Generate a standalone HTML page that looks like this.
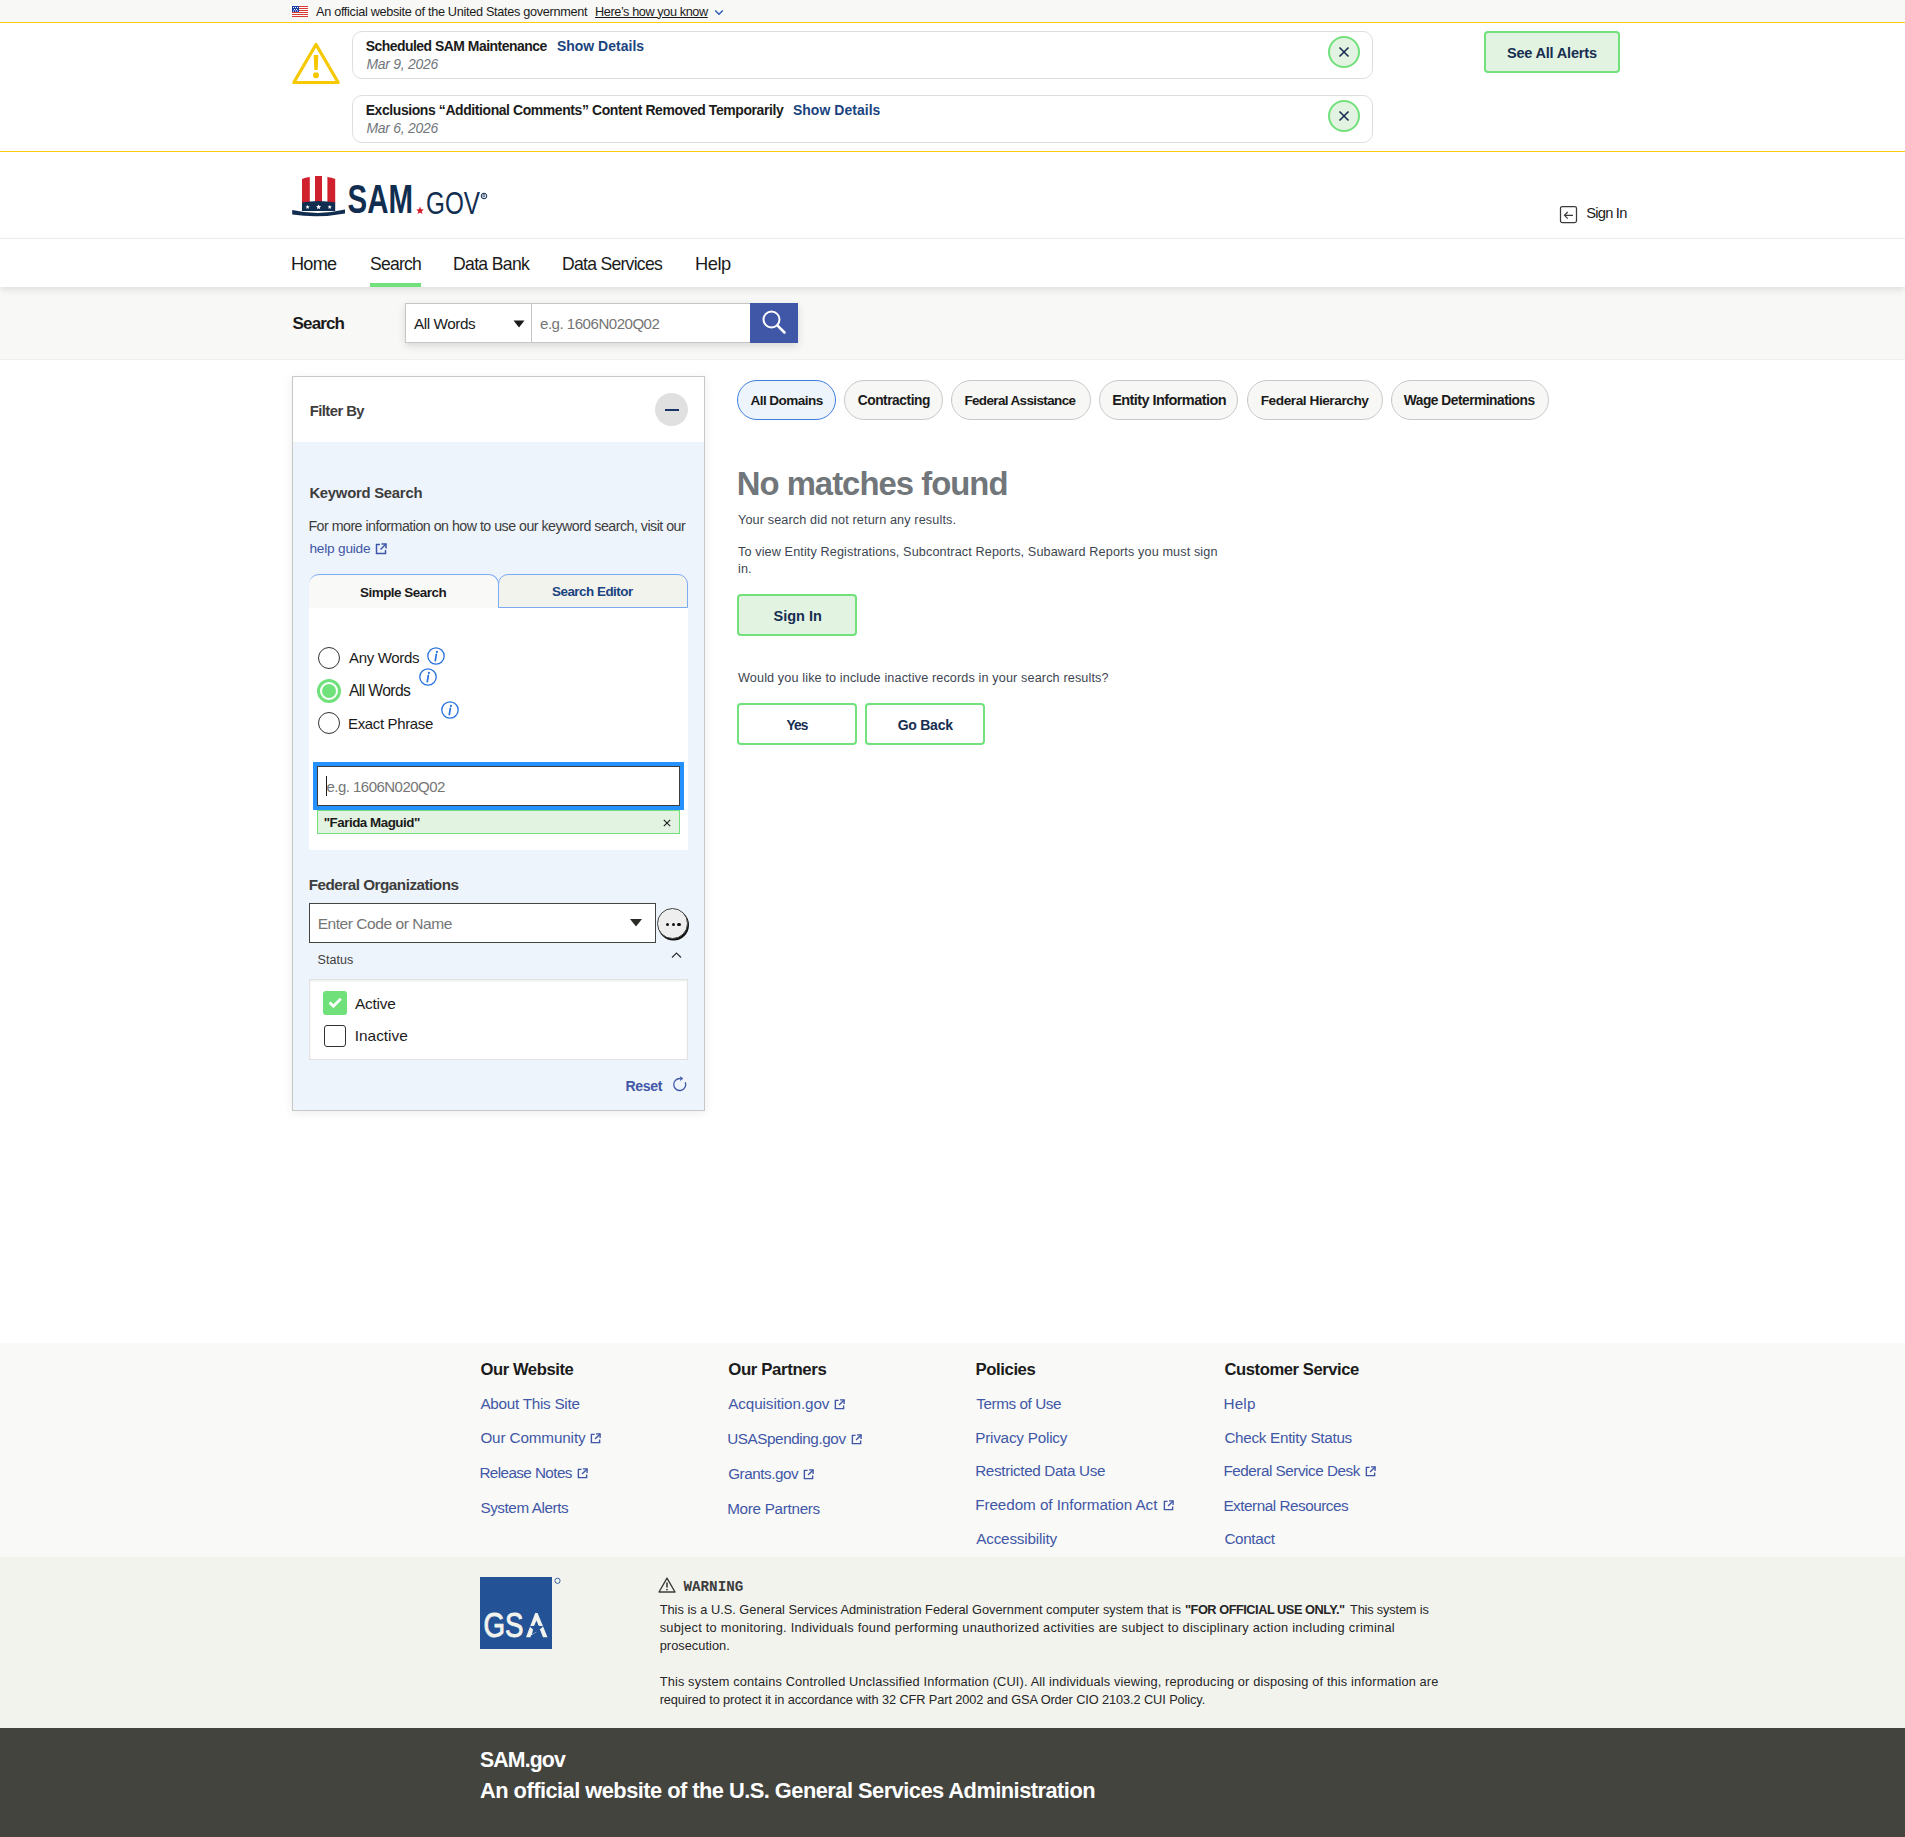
<!DOCTYPE html>
<html><head><meta charset="utf-8"><title>SAM.gov Search</title>
<style>
html,body{margin:0;padding:0;}
body{width:1905px;height:1837px;position:relative;overflow:hidden;background:#fff;font-family:"Liberation Sans",sans-serif;}
.t{position:absolute;white-space:nowrap;line-height:1;}
.a{position:absolute;box-sizing:border-box;}

.yl{position:absolute;left:0;width:1905px;height:1px;background:#facc0a;}
.alert{position:absolute;left:352px;width:1021px;height:48px;border:1px solid #dedede;border-radius:10px;box-sizing:border-box;background:#fff;}
.xc{position:absolute;width:32px;height:32px;border:2px solid #70e17b;background:#e3f3e1;border-radius:50%;box-sizing:border-box;}
.gbtn{position:absolute;box-sizing:border-box;border:2px solid #70e17b;border-radius:4px;}
.pill{position:absolute;top:380px;height:40px;border:1px solid #c9c9c9;background:#f7f7f5;border-radius:20px;box-sizing:border-box;}
.ext{position:absolute;}

</style></head><body>
<div class="a" style="left:0;top:0;width:1905px;height:22px;background:#f8f8f6"></div>
<div class="yl" style="top:22px"></div>
<svg style="position:absolute;left:292px;top:6px" width="16" height="11" viewBox="0 0 16 11">
<rect width="16" height="11" fill="#fff"/>
<g fill="#d83933"><rect y="0" width="16" height="1"/><rect y="2" width="16" height="1"/><rect y="4" width="16" height="1"/><rect y="6" width="16" height="1"/><rect y="8" width="16" height="1"/><rect y="10" width="16" height="1"/></g>
<rect width="7" height="6" fill="#1a3fa8"/>
<g fill="#fff"><rect x="1" y="1" width="1" height="1"/><rect x="3" y="1" width="1" height="1"/><rect x="5" y="1" width="1" height="1"/><rect x="2" y="3" width="1" height="1"/><rect x="4" y="3" width="1" height="1"/><rect x="1" y="4.5" width="1" height="1"/><rect x="3" y="4.5" width="1" height="1"/><rect x="5" y="4.5" width="1" height="1"/></g>
</svg>
<svg style="position:absolute;left:714px;top:9px" width="10" height="7" viewBox="0 0 10 7"><path d="M1.2 1.5L5 5.2L8.8 1.5" fill="none" stroke="#2f5bb7" stroke-width="1.5"/></svg>
<div class="alert" style="top:31px"></div>
<div class="alert" style="top:95px"></div>
<div class="xc" style="left:1328px;top:36px"></div>
<svg style="position:absolute;left:1338px;top:46px" width="12" height="12" viewBox="0 0 12 12"><path d="M1.5 1.5L10.5 10.5M10.5 1.5L1.5 10.5" stroke="#162e51" stroke-width="1.6"/></svg>
<div class="xc" style="left:1328px;top:100px"></div>
<svg style="position:absolute;left:1338px;top:110px" width="12" height="12" viewBox="0 0 12 12"><path d="M1.5 1.5L10.5 10.5M10.5 1.5L1.5 10.5" stroke="#162e51" stroke-width="1.6"/></svg>
<svg style="position:absolute;left:291px;top:41px" width="50" height="45" viewBox="0 0 50 45">
<path d="M25 3.5L2.8 41.5H47.2Z" fill="none" stroke="#f5c800" stroke-width="3.2" stroke-linejoin="round"/>
<path d="M23.3 14.5h3.4l-0.6 14h-2.2z" fill="#f5c800" stroke="#f5c800" stroke-width="1.2" stroke-linejoin="round"/>
<circle cx="25" cy="34.2" r="3" fill="#f5c800"/></svg>
<div class="gbtn" style="left:1484px;top:31px;width:136px;height:42px;background:#e3f3e1"></div>
<div class="yl" style="top:151px"></div>
<svg style="position:absolute;left:290px;top:174px" width="200" height="45" viewBox="0 0 200 45">
<path d="M12 5 Q15 3.4 19.8 3 V29 H12 Z" fill="#d0202e"/>
<path d="M25 2 H32 V28.5 H25 Z" fill="#d0202e"/>
<path d="M37.4 3 Q42 3.4 45.2 5 V29 H37.4 Z" fill="#d0202e"/>
<path d="M12 28.6 Q28.6 25.6 45.2 28.6 V37 H12 Z" fill="#112e51"/>
<g fill="#fff"><path d="M17.6 30.9l0.6 1.4 1.5 0.1-1.2 1 0.4 1.5-1.3-0.8-1.3 0.8 0.4-1.5-1.2-1 1.5-0.1z"/><path d="M28.6 30.5l0.75 1.6 1.8 0.15-1.4 1.15 0.45 1.75-1.6-0.95-1.6 0.95 0.45-1.75-1.4-1.15 1.8-0.15z"/><path d="M39.7 30.9l0.6 1.4 1.5 0.1-1.2 1 0.4 1.5-1.3-0.8-1.3 0.8 0.4-1.5-1.2-1 1.5-0.1z"/></g>
<path d="M2.2 36 Q28.5 42 55 35.6 V39.5 Q28.5 44.5 2.2 40.5 Z" fill="#112e51"/>
<text x="57.5" y="39.2" font-family="Liberation Sans" font-weight="bold" font-size="40.5" fill="#112e51" textLength="65.5" lengthAdjust="spacingAndGlyphs">SAM</text>
<path d="M130 32.6l1.1 2.6 2.8 0.2-2.1 1.8 0.7 2.7-2.5-1.5-2.4 1.5 0.7-2.7-2.1-1.8 2.8-0.2z" fill="#d0202e"/>
<text x="136" y="39.5" font-family="Liberation Sans" font-size="31" fill="#112e51" textLength="54" lengthAdjust="spacingAndGlyphs">GOV</text>
<circle cx="194" cy="22" r="2.8" fill="none" stroke="#112e51" stroke-width="1"/>
<path d="M193 23.6V20.4h1.2a0.8 0.8 0 0 1 0 1.6h-1.2M194.2 22l0.9 1.6" fill="none" stroke="#112e51" stroke-width="0.6"/>
</svg>
<div class="a" style="left:0;top:238px;width:1905px;height:1px;background:#efefeb"></div>
<svg style="position:absolute;left:1559px;top:205px" width="20" height="20" viewBox="0 0 20 20">
<rect x="1.5" y="1.5" width="16" height="16" rx="1.8" fill="none" stroke="#3a3a3a" stroke-width="1.25"/>
<path d="M14 10.3H5.6M8.7 7L5.5 10.3L8.7 13.6" fill="none" stroke="#3a3a3a" stroke-width="1.2"/></svg>
<div class="a" style="left:0;top:287px;width:1905px;height:73px;background:#f8f8f6;border-bottom:1px solid #f0f0ec"></div>
<div class="a" style="left:0;top:239px;width:1905px;height:48px;background:#fff;box-shadow:0 3px 7px rgba(0,0,0,0.10)"></div>
<div class="a" style="left:370px;top:283px;width:51px;height:4px;background:#70e17b"></div>
<div class="a" style="left:405px;top:303px;width:393px;height:40px;box-shadow:0 3px 8px rgba(0,0,0,0.13)"></div>
<div class="a" style="left:405px;top:303px;width:127px;height:40px;background:#fff;border:1px solid #c6c6c6"></div>
<div class="a" style="left:532px;top:303px;width:219px;height:40px;background:#fff;border:1px solid #c6c6c6;border-left:none"></div>
<svg style="position:absolute;left:513px;top:320px" width="12" height="8" viewBox="0 0 12 8"><path d="M0.5 0.5H11.5L6 7.5Z" fill="#1b1b1b"/></svg>
<div class="a" style="left:750px;top:303px;width:48px;height:40px;background:#3f57a6"></div>
<svg style="position:absolute;left:761px;top:309px" width="26" height="26" viewBox="0 0 26 26">
<circle cx="10.5" cy="10.5" r="8" fill="none" stroke="#fff" stroke-width="2"/>
<path d="M16.3 16.3L23.5 23.5" stroke="#fff" stroke-width="2.6" stroke-linecap="round"/></svg>
<div class="a" style="left:292px;top:376px;width:413px;height:735px;border:1px solid #c7c7c7;background:#eef4fb;box-shadow:0 2px 10px rgba(0,0,0,0.08)"></div>
<div class="a" style="left:293px;top:377px;width:411px;height:65px;background:#fff"></div>
<div class="a" style="left:655px;top:393px;width:33px;height:33px;border-radius:50%;background:#e0e0e0"></div>
<div class="a" style="left:665px;top:408.5px;width:14px;height:2px;background:#1a3466"></div>
<svg class="ext" style="left:374.5px;top:542.5px" width="12" height="12" viewBox="0 0 12 12"><path d="M5 1.5H1.5v9h9V7" fill="none" stroke="#3f57a6" stroke-width="1.5"/><path d="M6.5 1h4.5v4.5" fill="none" stroke="#3f57a6" stroke-width="1.5"/><path d="M11 1L5.5 6.5" fill="none" stroke="#3f57a6" stroke-width="1.5"/></svg>
<div class="a" style="left:309px;top:574px;width:190px;height:34px;background:#f9f9f7;border-top:1px solid #7daaf5;border-right:1px solid #7daaf5;border-radius:10px 10px 0 0"></div>
<div class="a" style="left:498px;top:574px;width:190px;height:34px;background:#f3f3ee;border:1px solid #7daaf5;border-radius:10px 10px 0 0"></div>
<div class="a" style="left:309px;top:608px;width:379px;height:242px;background:#fff"></div>
<div class="a" style="left:318px;top:647px;width:22px;height:22px;border-radius:50%;border:1.5px solid #333;background:#fff"></div>
<div class="a" style="left:317px;top:679px;width:24px;height:24px;border-radius:50%;border:3px solid #70e17b;background:#fff"></div>
<div class="a" style="left:322px;top:684px;width:14px;height:14px;border-radius:50%;background:#70e17b"></div>
<div class="a" style="left:318px;top:712px;width:22px;height:22px;border-radius:50%;border:1.5px solid #333;background:#fff"></div>
<svg style="position:absolute;left:427.0px;top:647.0px" width="18" height="18" viewBox="0 0 18 18"><circle cx="9" cy="9" r="8.2" fill="none" stroke="#2672de" stroke-width="1.3"/><circle cx="9.9" cy="4.9" r="1.1" fill="#2672de"/><path d="M9.3 7.3L8.3 13.6" stroke="#2672de" stroke-width="1.7" stroke-linecap="round"/></svg>
<svg style="position:absolute;left:419.0px;top:668.0px" width="18" height="18" viewBox="0 0 18 18"><circle cx="9" cy="9" r="8.2" fill="none" stroke="#2672de" stroke-width="1.3"/><circle cx="9.9" cy="4.9" r="1.1" fill="#2672de"/><path d="M9.3 7.3L8.3 13.6" stroke="#2672de" stroke-width="1.7" stroke-linecap="round"/></svg>
<svg style="position:absolute;left:441.0px;top:701.0px" width="18" height="18" viewBox="0 0 18 18"><circle cx="9" cy="9" r="8.2" fill="none" stroke="#2672de" stroke-width="1.3"/><circle cx="9.9" cy="4.9" r="1.1" fill="#2672de"/><path d="M9.3 7.3L8.3 13.6" stroke="#2672de" stroke-width="1.7" stroke-linecap="round"/></svg>
<div class="a" style="left:313px;top:762px;width:371px;height:48px;border:4px solid #2491ff"></div>
<div class="a" style="left:317px;top:766px;width:363px;height:40px;border:1px solid #3d3d3d;background:#fff"></div>
<div class="a" style="left:325.5px;top:776px;width:1px;height:20px;background:#1b1b1b"></div>
<div class="a" style="left:317px;top:810px;width:363px;height:24px;border:1px solid #70e17b;background:#e3f3e1"></div>
<svg style="position:absolute;left:662.5px;top:818.8px" width="8" height="8" viewBox="0 0 8 8"><path d="M0.8 0.8L7.2 7.2M7.2 0.8L0.8 7.2" stroke="#1b1b1b" stroke-width="1.1"/></svg>
<div class="a" style="left:309px;top:903px;width:347px;height:40px;border:1px solid #454540;background:#fff"></div>
<svg style="position:absolute;left:629px;top:918px" width="14" height="10" viewBox="0 0 14 10"><path d="M1 1H13L7 8.5Z" fill="#2b2b27"/></svg>
<div class="a" style="left:656.5px;top:907.5px;width:31px;height:31px;border-radius:50%;border:1.6px solid #444;background:#eeeeee;box-shadow:1px 1.5px 0 #111"></div>
<div class="a" style="left:665.8px;top:922.6px;width:3.4px;height:3.4px;border-radius:50%;background:#111"></div>
<div class="a" style="left:671.5px;top:922.6px;width:3.4px;height:3.4px;border-radius:50%;background:#111"></div>
<div class="a" style="left:677.3px;top:922.6px;width:3.4px;height:3.4px;border-radius:50%;background:#111"></div>
<svg style="position:absolute;left:671px;top:951px" width="11" height="8" viewBox="0 0 11 8"><path d="M1 6.5L5.5 2L10 6.5" fill="none" stroke="#333" stroke-width="1.2"/></svg>
<div class="a" style="left:309px;top:979px;width:379px;height:81px;background:#fff;border:1px solid #e2e2e2;box-shadow:inset 0 1px 2px rgba(0,0,0,0.08)"></div>
<div class="a" style="left:323px;top:991px;width:24px;height:24px;border-radius:3px;background:#70e07a"></div>
<svg style="position:absolute;left:326px;top:994px" width="18" height="18" viewBox="0 0 18 18"><path d="M3.6 8.6L7.4 12.2L14.8 4.8" fill="none" stroke="#fff" stroke-width="2.8"/></svg>
<div class="a" style="left:324px;top:1025px;width:22px;height:22px;border-radius:3px;border:1.6px solid #333;background:#fff"></div>
<svg style="position:absolute;left:671px;top:1075px" width="18" height="18" viewBox="0 0 18 18">
<path d="M9 3.5 A6 6 0 1 0 14.3 7.3" fill="none" stroke="#3f57a6" stroke-width="1.3"/>
<path d="M9.2 1.2 L9.2 6.1 L12.2 3.6 Z" fill="#3f57a6"/></svg>
<div class="pill" style="left:737px;width:99px;border-color:#3d7de0;background:#edf4fc"></div>
<div class="pill" style="left:844.0px;width:99.0px"></div>
<div class="pill" style="left:951.4px;width:139.2px"></div>
<div class="pill" style="left:1099.4px;width:139.1px"></div>
<div class="pill" style="left:1247.2px;width:135.8px"></div>
<div class="pill" style="left:1391.0px;width:158.0px"></div>
<div class="gbtn" style="left:737px;top:594px;width:120px;height:42px;background:#e3f3e1"></div>
<div class="gbtn" style="left:737px;top:703px;width:120px;height:42px;background:#fff"></div>
<div class="gbtn" style="left:865px;top:703px;width:120px;height:42px;background:#fff"></div>
<div class="a" style="left:0;top:1343px;width:1905px;height:214px;background:#f9f9f7"></div>
<div class="a" style="left:0;top:1557px;width:1905px;height:171px;background:#f3f3ee"></div>
<div class="a" style="left:0;top:1728px;width:1905px;height:109px;background:#44443f"></div>
<svg class="ext" style="left:590.0px;top:1432.5px" width="11" height="11" viewBox="0 0 12 12"><path d="M5 1.5H1.5v9h9V7" fill="none" stroke="#3f57a6" stroke-width="1.5"/><path d="M6.5 1h4.5v4.5" fill="none" stroke="#3f57a6" stroke-width="1.5"/><path d="M11 1L5.5 6.5" fill="none" stroke="#3f57a6" stroke-width="1.5"/></svg>
<svg class="ext" style="left:576.5px;top:1467.5px" width="11" height="11" viewBox="0 0 12 12"><path d="M5 1.5H1.5v9h9V7" fill="none" stroke="#3f57a6" stroke-width="1.5"/><path d="M6.5 1h4.5v4.5" fill="none" stroke="#3f57a6" stroke-width="1.5"/><path d="M11 1L5.5 6.5" fill="none" stroke="#3f57a6" stroke-width="1.5"/></svg>
<svg class="ext" style="left:834.0px;top:1398.5px" width="11" height="11" viewBox="0 0 12 12"><path d="M5 1.5H1.5v9h9V7" fill="none" stroke="#3f57a6" stroke-width="1.5"/><path d="M6.5 1h4.5v4.5" fill="none" stroke="#3f57a6" stroke-width="1.5"/><path d="M11 1L5.5 6.5" fill="none" stroke="#3f57a6" stroke-width="1.5"/></svg>
<svg class="ext" style="left:851.0px;top:1434.0px" width="11" height="11" viewBox="0 0 12 12"><path d="M5 1.5H1.5v9h9V7" fill="none" stroke="#3f57a6" stroke-width="1.5"/><path d="M6.5 1h4.5v4.5" fill="none" stroke="#3f57a6" stroke-width="1.5"/><path d="M11 1L5.5 6.5" fill="none" stroke="#3f57a6" stroke-width="1.5"/></svg>
<svg class="ext" style="left:803.0px;top:1468.5px" width="11" height="11" viewBox="0 0 12 12"><path d="M5 1.5H1.5v9h9V7" fill="none" stroke="#3f57a6" stroke-width="1.5"/><path d="M6.5 1h4.5v4.5" fill="none" stroke="#3f57a6" stroke-width="1.5"/><path d="M11 1L5.5 6.5" fill="none" stroke="#3f57a6" stroke-width="1.5"/></svg>
<svg class="ext" style="left:1163.0px;top:1499.5px" width="11" height="11" viewBox="0 0 12 12"><path d="M5 1.5H1.5v9h9V7" fill="none" stroke="#3f57a6" stroke-width="1.5"/><path d="M6.5 1h4.5v4.5" fill="none" stroke="#3f57a6" stroke-width="1.5"/><path d="M11 1L5.5 6.5" fill="none" stroke="#3f57a6" stroke-width="1.5"/></svg>
<svg class="ext" style="left:1364.5px;top:1465.5px" width="11" height="11" viewBox="0 0 12 12"><path d="M5 1.5H1.5v9h9V7" fill="none" stroke="#3f57a6" stroke-width="1.5"/><path d="M6.5 1h4.5v4.5" fill="none" stroke="#3f57a6" stroke-width="1.5"/><path d="M11 1L5.5 6.5" fill="none" stroke="#3f57a6" stroke-width="1.5"/></svg>
<svg style="position:absolute;left:480px;top:1577px" width="84" height="73" viewBox="0 0 84 73">
<rect x="0" y="0" width="72" height="72" fill="#235296"/>
<text x="3.6" y="60.3" font-family="Liberation Sans" font-size="34.5" fill="#f3f3ee" stroke="#f3f3ee" stroke-width="0.9" textLength="40" lengthAdjust="spacingAndGlyphs">GS</text>
<path d="M46 60.3 L55.2 36 H57.6 L67.5 60.3 H63 L56.4 43.5 L50.4 60.3 Z" fill="#f3f3ee"/>
<path d="M49 54 L62 47 L63 51 L50 59 Z" fill="#f3f3ee"/>
<path d="M56.4 44.2 l2.1 4.6 5 0.4 -3.8 3.3 1.2 4.9 -4.5 -2.6 -4.5 2.6 1.2 -4.9 -3.8 -3.3 5 -0.4z" fill="#235296"/>
<circle cx="77.5" cy="3.8" r="2.6" fill="none" stroke="#235296" stroke-width="0.9"/>
</svg>
<svg style="position:absolute;left:658px;top:1577px" width="18" height="16" viewBox="0 0 18 16">
<path d="M9 1.2L1 15H17Z" fill="none" stroke="#3d3d3d" stroke-width="1.4" stroke-linejoin="round"/>
<path d="M9 5.5V10.5" stroke="#3d3d3d" stroke-width="1.6"/><circle cx="9" cy="12.6" r="0.9" fill="#3d3d3d"/></svg>
<div class="t" id="t0" style="left:316.00px;top:5.80px;font-size:12.70px;letter-spacing:-0.306px;font-weight:normal;font-style:normal;color:#1b1b1b;font-family:'Liberation Sans', sans-serif;">An official website of the United States government</div>
<div class="t" id="t1" style="left:595.00px;top:5.80px;font-size:12.68px;letter-spacing:-0.392px;font-weight:normal;font-style:normal;color:#1b1b1b;font-family:'Liberation Sans', sans-serif;text-decoration:underline;">Here’s how you know</div>
<div class="t" id="t2" style="left:365.70px;top:39.50px;font-size:13.95px;letter-spacing:-0.507px;font-weight:bold;font-style:normal;color:#1b1b1b;font-family:'Liberation Sans', sans-serif;">Scheduled SAM Maintenance</div>
<div class="t" id="t3" style="left:556.90px;top:39.50px;font-size:13.95px;letter-spacing:0.037px;font-weight:bold;font-style:normal;color:#1a4480;font-family:'Liberation Sans', sans-serif;">Show Details</div>
<div class="t" id="t4" style="left:366.50px;top:57.60px;font-size:13.95px;letter-spacing:-0.263px;font-weight:normal;font-style:italic;color:#71767a;font-family:'Liberation Sans', sans-serif;">Mar 9, 2026</div>
<div class="t" id="t5" style="left:365.70px;top:103.70px;font-size:13.95px;letter-spacing:-0.393px;font-weight:bold;font-style:normal;color:#1b1b1b;font-family:'Liberation Sans', sans-serif;">Exclusions “Additional Comments” Content Removed Temporarily</div>
<div class="t" id="t6" style="left:792.90px;top:103.70px;font-size:13.95px;letter-spacing:0.064px;font-weight:bold;font-style:normal;color:#1a4480;font-family:'Liberation Sans', sans-serif;">Show Details</div>
<div class="t" id="t7" style="left:366.50px;top:121.60px;font-size:13.95px;letter-spacing:-0.263px;font-weight:normal;font-style:italic;color:#71767a;font-family:'Liberation Sans', sans-serif;">Mar 6, 2026</div>
<div class="t" id="t8" style="left:1506.90px;top:45.80px;font-size:14.53px;letter-spacing:-0.186px;font-weight:bold;font-style:normal;color:#162e51;font-family:'Liberation Sans', sans-serif;">See All Alerts</div>
<div class="t" id="t9" style="left:1586.20px;top:206.00px;font-size:14.71px;letter-spacing:-0.766px;font-weight:normal;font-style:normal;color:#1b1b1b;font-family:'Liberation Sans', sans-serif;">Sign In</div>
<div class="t" id="t10" style="left:291.00px;top:254.50px;font-size:18.15px;letter-spacing:-0.767px;font-weight:normal;font-style:normal;color:#1b1b1b;font-family:'Liberation Sans', sans-serif;">Home</div>
<div class="t" id="t11" style="left:370.00px;top:255.50px;font-size:17.57px;letter-spacing:-0.776px;font-weight:normal;font-style:normal;color:#1b1b1b;font-family:'Liberation Sans', sans-serif;">Search</div>
<div class="t" id="t12" style="left:453.00px;top:255.50px;font-size:17.63px;letter-spacing:-0.678px;font-weight:normal;font-style:normal;color:#1b1b1b;font-family:'Liberation Sans', sans-serif;">Data Bank</div>
<div class="t" id="t13" style="left:562.00px;top:255.50px;font-size:17.59px;letter-spacing:-0.719px;font-weight:normal;font-style:normal;color:#1b1b1b;font-family:'Liberation Sans', sans-serif;">Data Services</div>
<div class="t" id="t14" style="left:695.00px;top:254.50px;font-size:18.31px;letter-spacing:-0.485px;font-weight:normal;font-style:normal;color:#1b1b1b;font-family:'Liberation Sans', sans-serif;">Help</div>
<div class="t" id="t15" style="left:292.60px;top:314.70px;font-size:17.03px;letter-spacing:-0.872px;font-weight:bold;font-style:normal;color:#1b1b1b;font-family:'Liberation Sans', sans-serif;">Search</div>
<div class="t" id="t16" style="left:414.00px;top:316.20px;font-size:15.27px;letter-spacing:-0.425px;font-weight:normal;font-style:normal;color:#1b1b1b;font-family:'Liberation Sans', sans-serif;">All Words</div>
<div class="t" id="t17" style="left:540.00px;top:316.20px;font-size:15.06px;letter-spacing:-0.486px;font-weight:normal;font-style:normal;color:#757575;font-family:'Liberation Sans', sans-serif;">e.g. 1606N020Q02</div>
<div class="t" id="t18" style="left:309.80px;top:404.00px;font-size:14.83px;letter-spacing:-0.573px;font-weight:bold;font-style:normal;color:#3d3d3d;font-family:'Liberation Sans', sans-serif;">Filter By</div>
<div class="t" id="t19" style="left:309.40px;top:486.00px;font-size:14.83px;letter-spacing:-0.242px;font-weight:bold;font-style:normal;color:#3d3d3d;font-family:'Liberation Sans', sans-serif;">Keyword Search</div>
<div class="t" id="t20" style="left:308.40px;top:519.30px;font-size:14.24px;letter-spacing:-0.515px;font-weight:normal;font-style:normal;color:#3d3d3d;font-family:'Liberation Sans', sans-serif;">For more information on how to use our keyword search, visit our</div>
<div class="t" id="t21" style="left:309.40px;top:542.00px;font-size:13.68px;letter-spacing:-0.211px;font-weight:normal;font-style:normal;color:#3f57a6;font-family:'Liberation Sans', sans-serif;">help guide</div>
<div class="t" id="t22" style="left:360.00px;top:585.60px;font-size:13.44px;letter-spacing:-0.500px;font-weight:bold;font-style:normal;color:#1b1b1b;font-family:'Liberation Sans', sans-serif;">Simple Search</div>
<div class="t" id="t23" style="left:552.00px;top:585.00px;font-size:13.40px;letter-spacing:-0.488px;font-weight:bold;font-style:normal;color:#1a4480;font-family:'Liberation Sans', sans-serif;">Search Editor</div>
<div class="t" id="t24" style="left:349.00px;top:649.80px;font-size:15.02px;letter-spacing:-0.331px;font-weight:normal;font-style:normal;color:#1b1b1b;font-family:'Liberation Sans', sans-serif;">Any Words</div>
<div class="t" id="t25" style="left:349.00px;top:682.60px;font-size:15.70px;letter-spacing:-0.624px;font-weight:normal;font-style:normal;color:#1b1b1b;font-family:'Liberation Sans', sans-serif;">All Words</div>
<div class="t" id="t26" style="left:348.00px;top:716.70px;font-size:14.97px;letter-spacing:-0.336px;font-weight:normal;font-style:normal;color:#1b1b1b;font-family:'Liberation Sans', sans-serif;">Exact Phrase</div>
<div class="t" id="t27" style="left:326.50px;top:779.00px;font-size:15.00px;letter-spacing:-0.528px;font-weight:normal;font-style:normal;color:#757575;font-family:'Liberation Sans', sans-serif;">e.g. 1606N020Q02</div>
<div class="t" id="t28" style="left:323.70px;top:815.60px;font-size:13.37px;letter-spacing:-0.471px;font-weight:bold;font-style:normal;color:#1b1b1b;font-family:'Liberation Sans', sans-serif;">"Farida Maguid"</div>
<div class="t" id="t29" style="left:308.70px;top:877.20px;font-size:15.26px;letter-spacing:-0.494px;font-weight:bold;font-style:normal;color:#3d3d3d;font-family:'Liberation Sans', sans-serif;">Federal Organizations</div>
<div class="t" id="t30" style="left:317.70px;top:915.70px;font-size:15.55px;letter-spacing:-0.467px;font-weight:normal;font-style:normal;color:#757575;font-family:'Liberation Sans', sans-serif;">Enter Code or Name</div>
<div class="t" id="t31" style="left:317.60px;top:953.70px;font-size:12.50px;letter-spacing:0.043px;font-weight:normal;font-style:normal;color:#3d3d3d;font-family:'Liberation Sans', sans-serif;">Status</div>
<div class="t" id="t32" style="left:355.00px;top:995.80px;font-size:15.41px;letter-spacing:-0.237px;font-weight:normal;font-style:normal;color:#1b1b1b;font-family:'Liberation Sans', sans-serif;">Active</div>
<div class="t" id="t33" style="left:354.80px;top:1027.90px;font-size:15.41px;letter-spacing:-0.018px;font-weight:normal;font-style:normal;color:#1b1b1b;font-family:'Liberation Sans', sans-serif;">Inactive</div>
<div class="t" id="t34" style="left:625.50px;top:1078.70px;font-size:14.07px;letter-spacing:-0.355px;font-weight:bold;font-style:normal;color:#3f57a6;font-family:'Liberation Sans', sans-serif;">Reset</div>
<div class="t" id="t35" style="left:750.50px;top:394.30px;font-size:13.52px;letter-spacing:-0.539px;font-weight:bold;font-style:normal;color:#1b1b1b;font-family:'Liberation Sans', sans-serif;">All Domains</div>
<div class="t" id="t36" style="left:857.70px;top:394.30px;font-size:13.78px;letter-spacing:-0.453px;font-weight:bold;font-style:normal;color:#1b1b1b;font-family:'Liberation Sans', sans-serif;">Contracting</div>
<div class="t" id="t37" style="left:964.40px;top:394.30px;font-size:13.45px;letter-spacing:-0.613px;font-weight:bold;font-style:normal;color:#1b1b1b;font-family:'Liberation Sans', sans-serif;">Federal Assistance</div>
<div class="t" id="t38" style="left:1112.20px;top:393.30px;font-size:14.53px;letter-spacing:-0.577px;font-weight:bold;font-style:normal;color:#1b1b1b;font-family:'Liberation Sans', sans-serif;">Entity Information</div>
<div class="t" id="t39" style="left:1260.70px;top:394.30px;font-size:13.70px;letter-spacing:-0.464px;font-weight:bold;font-style:normal;color:#1b1b1b;font-family:'Liberation Sans', sans-serif;">Federal Hierarchy</div>
<div class="t" id="t40" style="left:1403.80px;top:394.30px;font-size:13.73px;letter-spacing:-0.473px;font-weight:bold;font-style:normal;color:#1b1b1b;font-family:'Liberation Sans', sans-serif;">Wage Determinations</div>
<div class="t" id="t41" style="left:736.70px;top:468.20px;font-size:32.85px;letter-spacing:-0.973px;font-weight:bold;font-style:normal;color:#71767a;font-family:'Liberation Sans', sans-serif;">No matches found</div>
<div class="t" id="t42" style="left:738.00px;top:513.80px;font-size:12.65px;letter-spacing:0.128px;font-weight:normal;font-style:normal;color:#3d4551;font-family:'Liberation Sans', sans-serif;">Your search did not return any results.</div>
<div class="t" id="t43" style="left:738.00px;top:545.80px;font-size:12.65px;letter-spacing:0.118px;font-weight:normal;font-style:normal;color:#3d4551;font-family:'Liberation Sans', sans-serif;">To view Entity Registrations, Subcontract Reports, Subaward Reports you must sign</div>
<div class="t" id="t44" style="left:738.00px;top:563.10px;font-size:12.65px;letter-spacing:0.081px;font-weight:normal;font-style:normal;color:#3d4551;font-family:'Liberation Sans', sans-serif;">in.</div>
<div class="t" id="t45" style="left:773.60px;top:609.10px;font-size:14.53px;letter-spacing:-0.019px;font-weight:bold;font-style:normal;color:#162e51;font-family:'Liberation Sans', sans-serif;">Sign In</div>
<div class="t" id="t46" style="left:738.00px;top:672.10px;font-size:12.65px;letter-spacing:0.127px;font-weight:normal;font-style:normal;color:#3d4551;font-family:'Liberation Sans', sans-serif;">Would you like to include inactive records in your search results?</div>
<div class="t" id="t47" style="left:786.40px;top:718.80px;font-size:13.76px;letter-spacing:-0.880px;font-weight:bold;font-style:normal;color:#162e51;font-family:'Liberation Sans', sans-serif;">Yes</div>
<div class="t" id="t48" style="left:897.70px;top:717.80px;font-size:14.01px;letter-spacing:-0.252px;font-weight:bold;font-style:normal;color:#162e51;font-family:'Liberation Sans', sans-serif;">Go Back</div>
<div class="t" id="t49" style="left:480.50px;top:1361.60px;font-size:16.62px;letter-spacing:-0.429px;font-weight:bold;font-style:normal;color:#1b1b1b;font-family:'Liberation Sans', sans-serif;">Our Website</div>
<div class="t" id="t50" style="left:728.20px;top:1361.60px;font-size:16.81px;letter-spacing:-0.377px;font-weight:bold;font-style:normal;color:#1b1b1b;font-family:'Liberation Sans', sans-serif;">Our Partners</div>
<div class="t" id="t51" style="left:975.50px;top:1361.60px;font-size:16.73px;letter-spacing:-0.414px;font-weight:bold;font-style:normal;color:#1b1b1b;font-family:'Liberation Sans', sans-serif;">Policies</div>
<div class="t" id="t52" style="left:1224.50px;top:1361.60px;font-size:16.61px;letter-spacing:-0.434px;font-weight:bold;font-style:normal;color:#1b1b1b;font-family:'Liberation Sans', sans-serif;">Customer Service</div>
<div class="t" id="t53" style="left:480.40px;top:1395.90px;font-size:15.26px;letter-spacing:-0.259px;font-weight:normal;font-style:normal;color:#3f57a6;font-family:'Liberation Sans', sans-serif;">About This Site</div>
<div class="t" id="t54" style="left:480.40px;top:1430.00px;font-size:15.26px;letter-spacing:-0.129px;font-weight:normal;font-style:normal;color:#3f57a6;font-family:'Liberation Sans', sans-serif;">Our Community</div>
<div class="t" id="t55" style="left:479.40px;top:1464.70px;font-size:15.26px;letter-spacing:-0.583px;font-weight:normal;font-style:normal;color:#3f57a6;font-family:'Liberation Sans', sans-serif;">Release Notes</div>
<div class="t" id="t56" style="left:480.40px;top:1499.80px;font-size:15.26px;letter-spacing:-0.420px;font-weight:normal;font-style:normal;color:#3f57a6;font-family:'Liberation Sans', sans-serif;">System Alerts</div>
<div class="t" id="t57" style="left:728.20px;top:1396.00px;font-size:15.26px;letter-spacing:-0.096px;font-weight:normal;font-style:normal;color:#3f57a6;font-family:'Liberation Sans', sans-serif;">Acquisition.gov</div>
<div class="t" id="t58" style="left:727.20px;top:1431.00px;font-size:15.26px;letter-spacing:-0.415px;font-weight:normal;font-style:normal;color:#3f57a6;font-family:'Liberation Sans', sans-serif;">USASpending.gov</div>
<div class="t" id="t59" style="left:728.20px;top:1465.90px;font-size:15.26px;letter-spacing:-0.463px;font-weight:normal;font-style:normal;color:#3f57a6;font-family:'Liberation Sans', sans-serif;">Grants.gov</div>
<div class="t" id="t60" style="left:727.20px;top:1501.00px;font-size:15.26px;letter-spacing:-0.299px;font-weight:normal;font-style:normal;color:#3f57a6;font-family:'Liberation Sans', sans-serif;">More Partners</div>
<div class="t" id="t61" style="left:976.20px;top:1395.90px;font-size:15.26px;letter-spacing:-0.413px;font-weight:normal;font-style:normal;color:#3f57a6;font-family:'Liberation Sans', sans-serif;">Terms of Use</div>
<div class="t" id="t62" style="left:975.20px;top:1429.80px;font-size:15.26px;letter-spacing:-0.207px;font-weight:normal;font-style:normal;color:#3f57a6;font-family:'Liberation Sans', sans-serif;">Privacy Policy</div>
<div class="t" id="t63" style="left:975.20px;top:1462.80px;font-size:15.26px;letter-spacing:-0.343px;font-weight:normal;font-style:normal;color:#3f57a6;font-family:'Liberation Sans', sans-serif;">Restricted Data Use</div>
<div class="t" id="t64" style="left:975.20px;top:1497.00px;font-size:15.26px;letter-spacing:-0.069px;font-weight:normal;font-style:normal;color:#3f57a6;font-family:'Liberation Sans', sans-serif;">Freedom of Information Act</div>
<div class="t" id="t65" style="left:976.20px;top:1531.40px;font-size:15.26px;letter-spacing:-0.177px;font-weight:normal;font-style:normal;color:#3f57a6;font-family:'Liberation Sans', sans-serif;">Accessibility</div>
<div class="t" id="t66" style="left:1223.40px;top:1395.90px;font-size:15.26px;letter-spacing:0.239px;font-weight:normal;font-style:normal;color:#3f57a6;font-family:'Liberation Sans', sans-serif;">Help</div>
<div class="t" id="t67" style="left:1224.40px;top:1429.80px;font-size:15.26px;letter-spacing:-0.292px;font-weight:normal;font-style:normal;color:#3f57a6;font-family:'Liberation Sans', sans-serif;">Check Entity Status</div>
<div class="t" id="t68" style="left:1223.40px;top:1462.80px;font-size:15.26px;letter-spacing:-0.466px;font-weight:normal;font-style:normal;color:#3f57a6;font-family:'Liberation Sans', sans-serif;">Federal Service Desk</div>
<div class="t" id="t69" style="left:1223.40px;top:1498.00px;font-size:15.26px;letter-spacing:-0.462px;font-weight:normal;font-style:normal;color:#3f57a6;font-family:'Liberation Sans', sans-serif;">External Resources</div>
<div class="t" id="t70" style="left:1224.40px;top:1531.40px;font-size:15.26px;letter-spacing:-0.336px;font-weight:normal;font-style:normal;color:#3f57a6;font-family:'Liberation Sans', sans-serif;">Contact</div>
<div class="t" id="t71" style="left:683.40px;top:1579.70px;font-size:14.25px;letter-spacing:0.015px;font-weight:bold;font-style:normal;color:#3d3d3d;font-family:'Liberation Mono', monospace;">WARNING</div>
<div class="t" id="t72" style="left:659.70px;top:1603.70px;font-size:12.79px;letter-spacing:0.009px;font-weight:normal;font-style:normal;color:#262626;font-family:'Liberation Sans', sans-serif;">This is a U.S. General Services Administration Federal Government computer system that is</div>
<div class="t" id="t73" style="left:1185.00px;top:1603.70px;font-size:12.79px;letter-spacing:-0.481px;font-weight:bold;font-style:normal;color:#262626;font-family:'Liberation Sans', sans-serif;">"FOR OFFICIAL USE ONLY."</div>
<div class="t" id="t74" style="left:1350.00px;top:1603.70px;font-size:12.79px;letter-spacing:-0.167px;font-weight:normal;font-style:normal;color:#262626;font-family:'Liberation Sans', sans-serif;">This system is</div>
<div class="t" id="t75" style="left:659.70px;top:1621.80px;font-size:12.79px;letter-spacing:0.258px;font-weight:normal;font-style:normal;color:#262626;font-family:'Liberation Sans', sans-serif;">subject to monitoring. Individuals found performing unauthorized activities are subject to disciplinary action including criminal</div>
<div class="t" id="t76" style="left:659.70px;top:1639.60px;font-size:12.79px;letter-spacing:0.038px;font-weight:normal;font-style:normal;color:#262626;font-family:'Liberation Sans', sans-serif;">prosecution.</div>
<div class="t" id="t77" style="left:659.70px;top:1676.00px;font-size:12.79px;letter-spacing:0.147px;font-weight:normal;font-style:normal;color:#262626;font-family:'Liberation Sans', sans-serif;">This system contains Controlled Unclassified Information (CUI). All individuals viewing, reproducing or disposing of this information are</div>
<div class="t" id="t78" style="left:659.70px;top:1693.80px;font-size:12.79px;letter-spacing:-0.104px;font-weight:normal;font-style:normal;color:#262626;font-family:'Liberation Sans', sans-serif;">required to protect it in accordance with 32 CFR Part 2002 and GSA Order CIO 2103.2 CUI Policy.</div>
<div class="t" id="t79" style="left:480.00px;top:1750.00px;font-size:21.27px;letter-spacing:-0.857px;font-weight:bold;font-style:normal;color:#ffffff;font-family:'Liberation Sans', sans-serif;">SAM.gov</div>
<div class="t" id="t80" style="left:480.00px;top:1779.70px;font-size:21.84px;letter-spacing:-0.526px;font-weight:bold;font-style:normal;color:#ffffff;font-family:'Liberation Sans', sans-serif;">An official website of the U.S. General Services Administration</div>
</body></html>
